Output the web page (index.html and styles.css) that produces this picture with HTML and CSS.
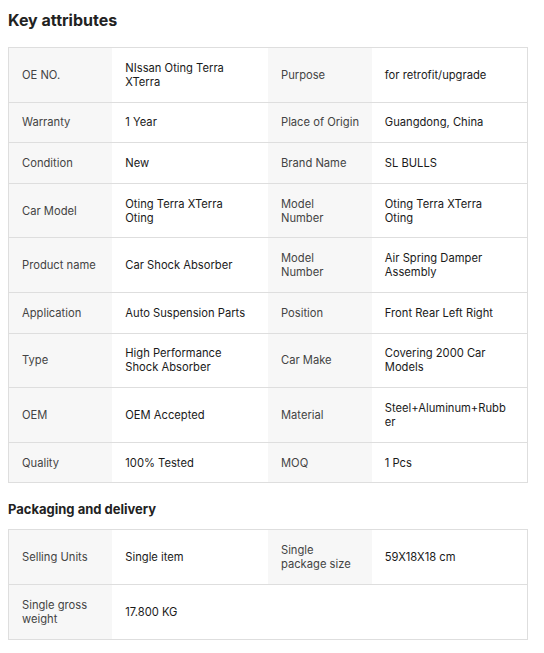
FILE: index.html
```html
<!DOCTYPE html>
<html>
<head>
<meta charset="utf-8">
<link rel="stylesheet" href="styles.css">
</head>
<body>
<h2 class="title">Key attributes</h2>
<table class="attrs">
  <colgroup><col class="c-l"><col class="c-v"><col class="c-l"><col class="c-v"></colgroup>
  <tr><td class="lbl">OE NO.</td><td class="val">NIssan Oting Terra XTerra</td><td class="lbl">Purpose</td><td class="val">for retrofit/upgrade</td></tr>
  <tr><td class="lbl">Warranty</td><td class="val">1 Year</td><td class="lbl">Place of Origin</td><td class="val">Guangdong, China</td></tr>
  <tr><td class="lbl">Condition</td><td class="val">New</td><td class="lbl">Brand Name</td><td class="val">SL BULLS</td></tr>
  <tr><td class="lbl">Car Model</td><td class="val">Oting Terra XTerra Oting</td><td class="lbl">Model<br>Number</td><td class="val">Oting Terra XTerra Oting</td></tr>
  <tr><td class="lbl">Product name</td><td class="val">Car Shock Absorber</td><td class="lbl">Model<br>Number</td><td class="val">Air Spring Damper Assembly</td></tr>
  <tr><td class="lbl">Application</td><td class="val">Auto Suspension Parts</td><td class="lbl">Position</td><td class="val">Front Rear Left Right</td></tr>
  <tr><td class="lbl">Type</td><td class="val">High Performance Shock Absorber</td><td class="lbl">Car Make</td><td class="val">Covering 2000 Car Models</td></tr>
  <tr><td class="lbl">OEM</td><td class="val">OEM Accepted</td><td class="lbl">Material</td><td class="val">Steel+Aluminum+Rubber</td></tr>
  <tr><td class="lbl">Quality</td><td class="val">100% Tested</td><td class="lbl">MOQ</td><td class="val">1 Pcs</td></tr>
</table>
<h3 class="subtitle">Packaging and delivery</h3>
<table class="attrs">
  <colgroup><col class="c-l"><col class="c-v"><col class="c-l"><col class="c-v"></colgroup>
  <tr><td class="lbl">Selling Units</td><td class="val">Single item</td><td class="lbl">Single package size</td><td class="val">59X18X18 cm</td></tr>
  <tr><td class="lbl">Single gross weight</td><td class="val" colspan="3">17.800 KG</td></tr>
</table>
</body>
</html>
```
FILE: styles.css
```css
body {
  margin: 8px;
  font-family: Inter, "Noto Sans", "Liberation Sans", sans-serif;
  color: #222;
  background: #fff;
}
.title {
  margin: 0 0 15px;
  font-size: 16px;
  line-height: 24px;
  font-weight: 700;
  color: #222;
}
.subtitle {
  margin: 16px 0 10px;
  font-size: 13px;
  line-height: 20px;
  font-weight: 700;
  color: #222;
}
.attrs {
  width: 520px;
  border-collapse: collapse;
  table-layout: fixed;
  border: 1px solid #dedede;
}
.c-l { width: 20%; }
.c-v { width: 30%; }
.attrs td {
  border-top: 1px solid #dedede;
  border-bottom: 1px solid #dedede;
  padding: 12.8px 11px 12.8px 13px;
  font-size: 11.2px;
  line-height: 14px;
  vertical-align: middle;
  overflow-wrap: anywhere;
}
.attrs .lbl {
  background: #f7f7f7;
  color: #444;
}
.attrs .val {
  padding-left: 13px;
  padding-right: 17px;
  color: #1a1a1a;
  font-weight: 400;
}
```
